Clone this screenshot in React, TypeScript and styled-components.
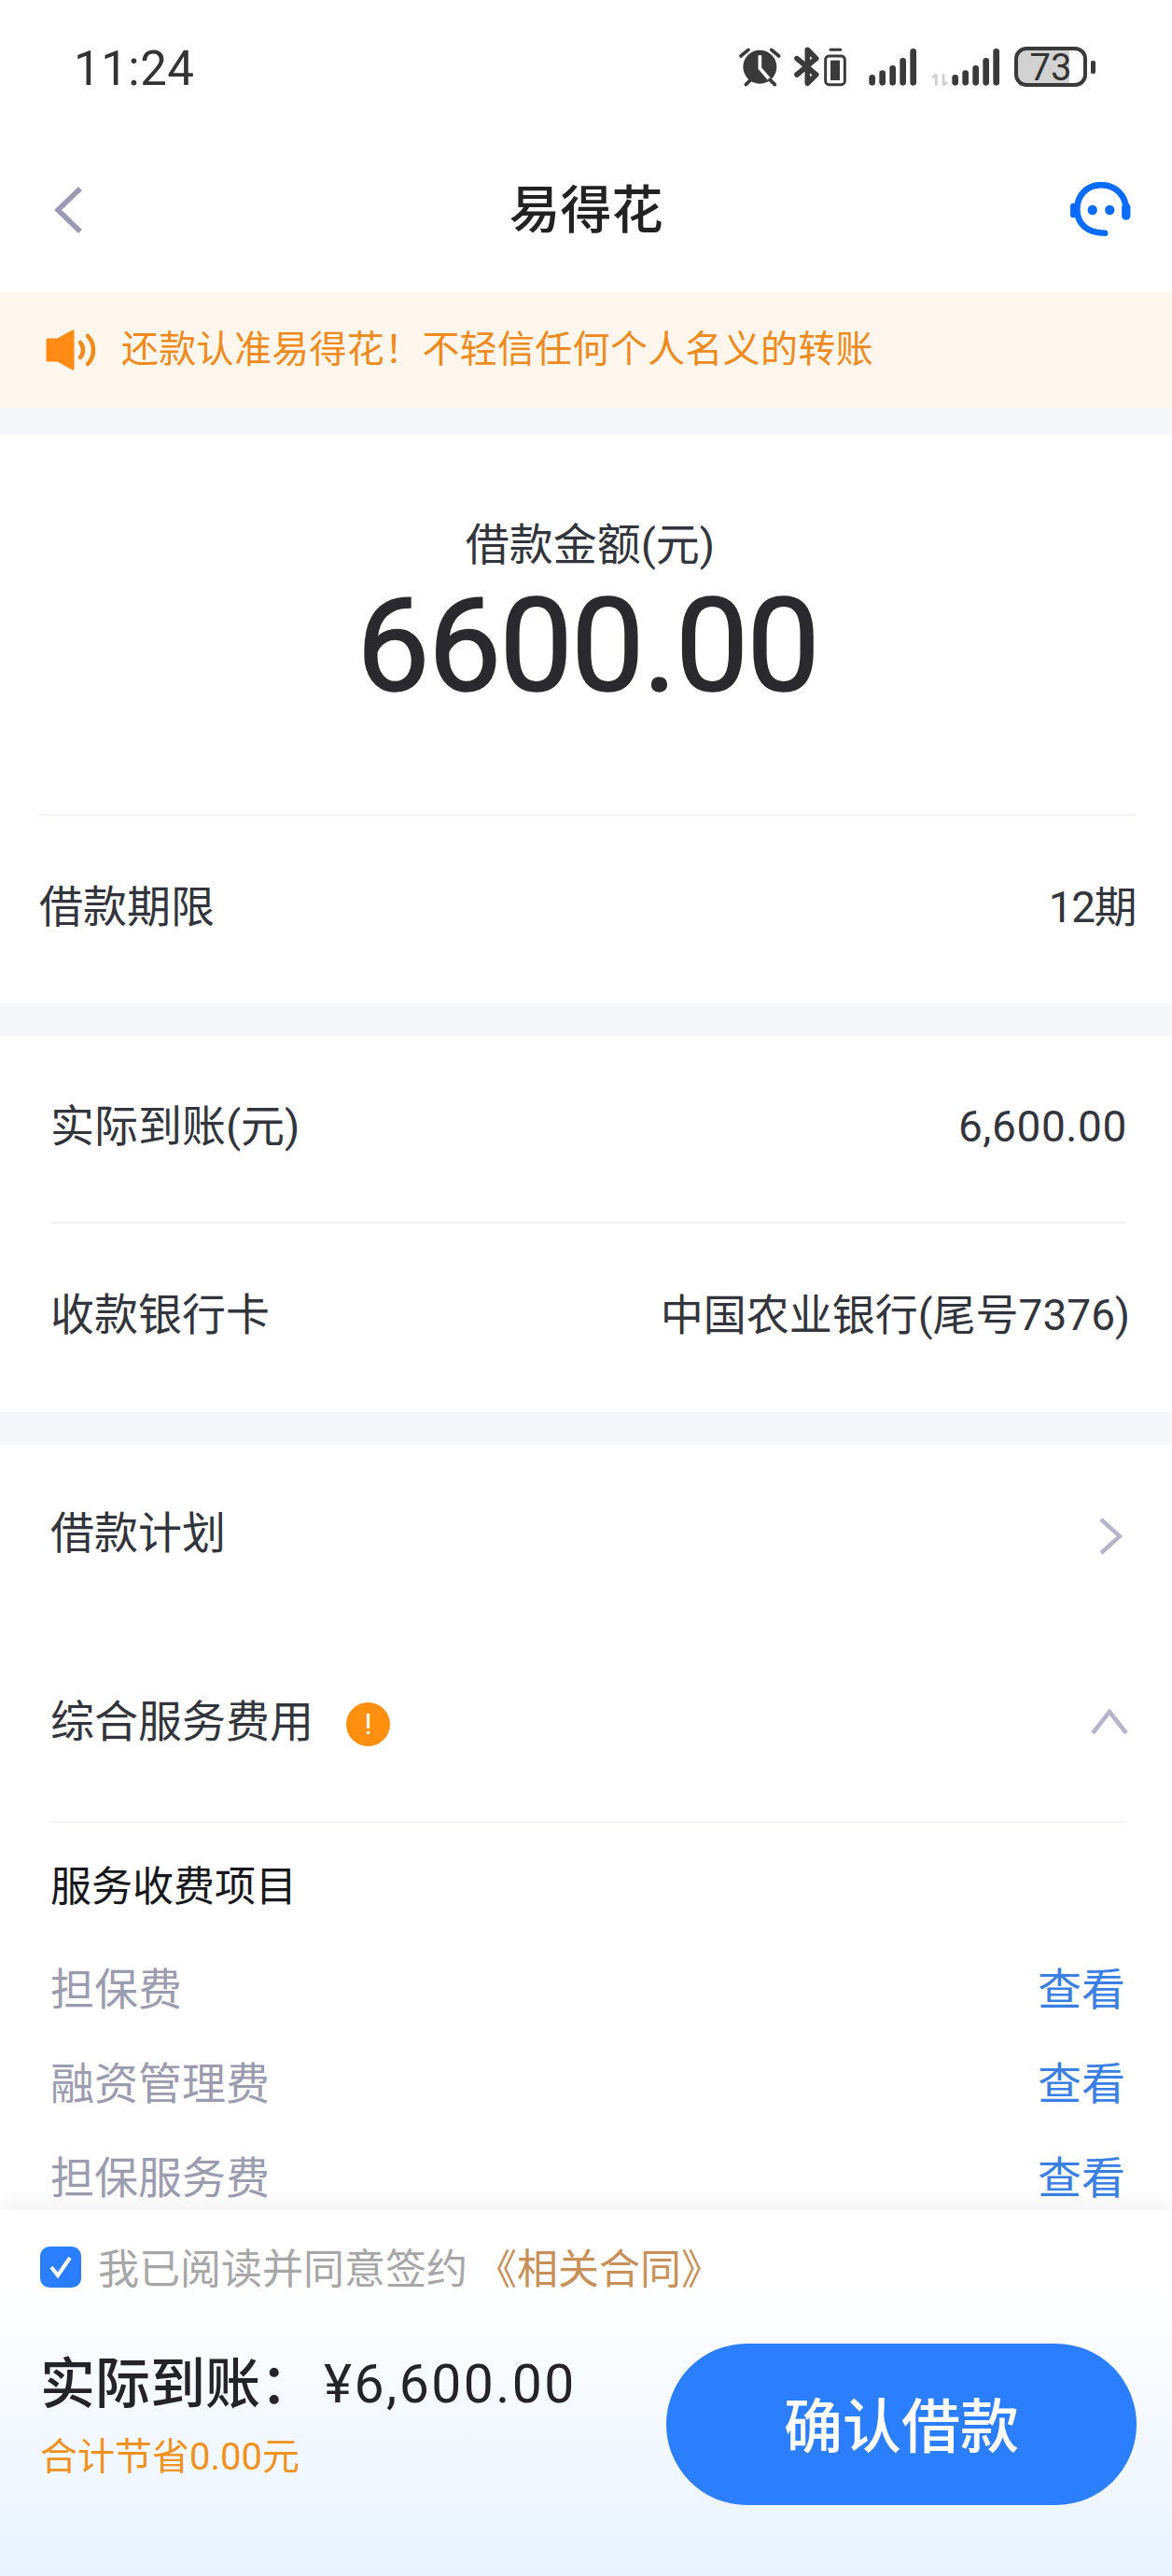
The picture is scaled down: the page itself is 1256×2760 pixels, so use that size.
import React from "react";
import styled, { createGlobalStyle } from "styled-components";

const CJK = `Roboto, "Noto Sans CJK SC", sans-serif`;

const Global = createGlobalStyle`
  html, body { margin: 0; padding: 0; background: #fff; }
  * { box-sizing: border-box; }
  body { font-family: ${CJK}; }
`;

const Page = styled.div`
  width: 1256px;
  height: 2760px;
  display: flex;
  flex-direction: column;
  overflow: hidden;
  background: #f5f7fa;
`;
const Main = styled.main`
  flex: 1;
  min-height: 0;
  overflow: hidden;
`;
const StatusBar = styled.div`
  height: 140px;
  background: #fff;
  display: flex;
  justify-content: space-between;
  padding: 30px 82px 0 79px;
`;
const Time = styled.div`
  font-family: Roboto, sans-serif;
  font-size: 51px;
  line-height: 88px;
  color: #333;
  letter-spacing: 0.5px;
`;
const StatusIcons = styled.div`
  display: flex;
  align-items: flex-start;
`;
const Battery = styled.div`
  width: 78px;
  height: 43px;
  margin: 20px 0 0 10px;
  border: 4px solid #3a3a3a;
  border-radius: 13px;
  background: linear-gradient(90deg, #d2d2d2 78%, #fff 78%);
  font-family: Roboto, sans-serif;
  font-size: 40px;
  line-height: 37px;
  text-align: center;
  color: #333;
`;
const BatteryNub = styled.div`
  width: 5px;
  height: 14px;
  margin: 35px 0 0 4px;
  border-radius: 2px;
  background: #3a3a3a;
`;
const NavBar = styled.header`
  height: 173px;
  background: #fff;
  display: grid;
  grid-template-columns: 1fr auto 1fr;
  align-items: center;
  padding: 0 42px 3px 56px;
`;
const NavTitle = styled.h1`
  margin: 0 14px 0 0;
  font-size: 55px;
  font-weight: 500;
  line-height: 70px;
  color: #222;
`;
const NavAction = styled.div`
  justify-self: end;
  display: flex;
`;
const Banner = styled.div`
  height: 124px;
  background: #fff7ee;
  display: flex;
  align-items: center;
  gap: 24px;
  padding: 0 0 0 48px;
  font-size: 40px;
  letter-spacing: 0.3px;
  line-height: 50px;
  color: #f08a1d;
`;
const Card = styled.section<{ $top: number }>`
  margin-top: ${(p) => p.$top}px;
  background: #fff;
`;
const AmountBlock = styled.div`
  height: 408px;
  margin: 0 39px 0 42px;
  border-bottom: 2px solid #f2f3f6;
  display: flex;
  flex-direction: column;
  align-items: center;
  padding-top: 88px;
`;
const AmountLabel = styled.div`
  margin-left: 6px;
  font-size: 47px;
  line-height: 60px;
  color: #33353d;
`;
const AmountValue = styled.div`
  margin-top: 3px;
  font-family: Roboto, sans-serif;
  font-size: 140px;
  line-height: 150px;
  letter-spacing: -2px;
  color: #2a2a2e;
  -webkit-text-stroke: 1.5px #2a2a2e;
`;
const Row = styled.div<{ $h: number; $left: number; $right: number; $line?: boolean }>`
  height: ${(p) => p.$h}px;
  margin: 0 ${(p) => p.$right}px 0 ${(p) => p.$left}px;
  display: flex;
  align-items: center;
  justify-content: space-between;
  font-size: 47px;
  line-height: 60px;
  color: #33353d;
  padding-bottom: 6px;
  border-bottom: ${(p) => (p.$line ? "2px solid #f2f3f6" : "0")};
`;
const RowValue = styled.span<{ $spacing?: number; $overhang?: number }>`
  font-size: 46px;
  letter-spacing: ${(p) => p.$spacing ?? 0}px;
  margin-right: ${(p) => -(p.$overhang ?? 0)}px;
`;
const RowLabel = styled.span`
  display: flex;
  align-items: center;
  gap: 35px;
`;
const WarnBadge = styled.span`
  width: 47px;
  height: 47px;
  border-radius: 50%;
  background: #ff8f0f;
  color: #fff;
  font-size: 32px;
  line-height: 47px;
  text-align: center;
  margin-top: 6px;
`;
const ChevronSlot = styled.span<{ $down: number; $shift: number }>`
  display: flex;
  margin-top: ${(p) => p.$down}px;
  margin-right: ${(p) => p.$shift}px;
`;
const FeeTitle = styled.div`
  margin: 0 50px 0 54px;
  height: 91px;
  padding-top: 38px;
  font-size: 44px;
  line-height: 62px;
  color: #17171c;
`;
const FeeList = styled.div`
  margin: 37px 50px 0 54px;
`;
const FeeRow = styled.div`
  height: 101px;
  display: flex;
  align-items: center;
  justify-content: space-between;
  font-size: 47px;
  line-height: 60px;
  color: #9c9cb0;
`;
const FeeLink = styled.span`
  color: #3a80e4;
`;
const Footer = styled.footer`
  height: 392px;
  flex: none;
  position: relative;
  padding: 36px 38px 0 43px;
  background: linear-gradient(180deg, #fff 0%, #fff 20%, #e9f3ff 100%);
  box-shadow: 0 -8px 18px rgba(0, 0, 0, 0.05);
`;
const AgreeRow = styled.div`
  display: flex;
  align-items: center;
  height: 50px;
  font-size: 44px;
  line-height: 50px;
  color: #a7a7a7;
`;
const AgreeText = styled.span`
  margin-top: 5px;
`;
const Check = styled.span`
  width: 44px;
  height: 44px;
  flex: none;
  border-radius: 10px;
  background: #2b7fff;
  margin-right: 18px;
  display: flex;
  align-items: center;
  justify-content: center;
`;
const Contract = styled.span`
  margin-top: 5px;
  margin-left: 9px;
  color: #c8915a;
`;
const SummaryRow = styled.div`
  display: flex;
  justify-content: space-between;
  align-items: flex-start;
  margin-top: 57px;
`;
const SummaryText = styled.div`
  display: flex;
  flex-direction: column;
`;
const Received = styled.div`
  font-size: 57px;
  letter-spacing: 2.5px;
  line-height: 70px;
  margin-top: 9px;
  color: #242428;
  display: flex;
  align-items: center;
`;
const ReceivedLabel = styled.span`
  font-weight: 500;
  width: 304px;
  font-size: 59px;
  letter-spacing: 0;
`;
const Saved = styled.div`
  margin-top: 18px;
  font-size: 40px;
  line-height: 50px;
  color: #f0921e;
`;
const ConfirmButton = styled.button`
  width: 504px;
  height: 173px;
  border: 0;
  border-radius: 87px;
  background: #2b7fff;
  color: #fff;
  font-family: ${CJK};
  font-size: 63px;
  font-weight: 500;
  padding: 0 0 6px;
`;

const Signal = ({ x }: { x: number }) => (
  <g stroke="#3a3a3a" strokeWidth="20" strokeLinecap="round">
    <path d={`M${x} 175V160M${x + 33} 175V146M${x + 66} 175V130M${x + 99} 175V106M${x + 132} 175V76`} />
  </g>
);

const StatusGlyphs = () => (
  <svg width="315" height="70" viewBox="0 0 945 210">
    <circle cx="157" cy="125" r="54" fill="#3a3a3a" />
    <path d="M157 88V130L188 165" stroke="#fff" strokeWidth="11" fill="none" />
    <path d="M96 90L120 70M218 90L194 70M112 182L128 166M205 182L189 166" stroke="#3a3a3a" strokeWidth="11" strokeLinecap="round" />
    <path d="M276 98L338 150L310 178V70L338 98L276 150" stroke="#3a3a3a" strokeWidth="17" fill="none" strokeLinejoin="round" strokeLinecap="round" />
    <rect x="368" y="90" width="62" height="92" rx="12" fill="none" stroke="#3a3a3a" strokeWidth="9" />
    <rect x="384" y="104" width="30" height="64" fill="#3a3a3a" />
    <path d="M384 70H416" stroke="#3a3a3a" strokeWidth="9" strokeLinecap="round" />
    <Signal x={518} />
    <path d="M724 185V150M712 160L724 148M747 148V185M759 173L747 185" stroke="#cfcfcf" strokeWidth="8" fill="none" />
    <Signal x={785} />
  </svg>
);

const BackIcon = () => (
  <svg width="34" height="52" viewBox="0 0 34 52">
    <path d="M30 3L6 26L30 49" stroke="#9a9ab5" strokeWidth="5.5" fill="none" />
  </svg>
);

const HeadsetIcon = () => (
  <svg width="68" height="60" viewBox="0 0 66 58">
    <path d="M8 28C8 13 19 3 33 3C47 3 59 13 59 29M8 28C8 44 19 53 37 53" stroke="#0a6cff" strokeWidth="6.5" fill="none" strokeLinecap="round" />
    <path d="M59 26V35" stroke="#0a6cff" strokeWidth="9" strokeLinecap="round" />
    <path d="M4 25V34" stroke="#0a6cff" strokeWidth="6" strokeLinecap="round" />
    <circle cx="24" cy="29" r="5" fill="#0a6cff" />
    <circle cx="42" cy="29" r="5" fill="#0a6cff" />
  </svg>
);

const SpeakerIcon = () => (
  <svg width="58" height="44" viewBox="0 0 58 42">
    <path d="M3 10H14L30 1V41L14 32H3Z" fill="#ff8a14" stroke="#ff8a14" strokeWidth="3" strokeLinejoin="round" />
    <path d="M38 13C42 17 42 25 38 29M46 6C54 14 54 28 46 36" stroke="#f08a1d" strokeWidth="4.5" fill="none" strokeLinecap="round" />
  </svg>
);

const ChevronRight = () => (
  <svg width="26" height="40" viewBox="0 0 26 40">
    <path d="M3 2L23 20L3 38" stroke="#b5b5cc" strokeWidth="4.5" fill="none" />
  </svg>
);

const ChevronUp = () => (
  <svg width="40" height="28" viewBox="0 0 40 28">
    <path d="M2 26L20 3L38 26" stroke="#b5b5cc" strokeWidth="4.5" fill="none" />
  </svg>
);

const fees = ["担保费", "融资管理费", "担保服务费"];

export default function App() {
  return (
    <Page>
      <Global />
      <Main>
        <StatusBar>
          <Time>11:24</Time>
          <StatusIcons>
            <StatusGlyphs />
            <Battery>73</Battery>
            <BatteryNub />
          </StatusIcons>
        </StatusBar>
        <NavBar>
          <BackIcon />
          <NavTitle>易得花</NavTitle>
          <NavAction>
            <HeadsetIcon />
          </NavAction>
        </NavBar>
        <Banner>
          <SpeakerIcon />
          <span>还款认准易得花！不轻信任何个人名义的转账</span>
        </Banner>
        <Card $top={29}>
          <AmountBlock>
            <AmountLabel>借款金额(元)</AmountLabel>
            <AmountValue>6600.00</AmountValue>
          </AmountBlock>
          <Row $h={201} $left={42} $right={39}>
            <span>借款期限</span>
            <RowValue $spacing={-1.5}>12期</RowValue>
          </Row>
        </Card>
        <Card $top={35}>
          <Row $h={201} $left={54} $right={50} $line>
            <span>实际到账(元)</span>
            <RowValue $spacing={0.6} $overhang={2}>6,600.00</RowValue>
          </Row>
          <Row $h={202} $left={54} $right={50}>
            <span>收款银行卡</span>
            <RowValue $overhang={5}>中国农业银行(尾号7376)</RowValue>
          </Row>
        </Card>
        <Card $top={35}>
          <Row $h={196} $left={54} $right={50}>
            <span>借款计划</span>
            <ChevronSlot $down={6} $shift={3}>
              <ChevronRight />
            </ChevronSlot>
          </Row>
          <Row $h={209} $left={54} $right={50} $line>
            <RowLabel>
              <span>综合服务费用</span>
              <WarnBadge>!</WarnBadge>
            </RowLabel>
            <ChevronSlot $down={0} $shift={-3}>
              <ChevronUp />
            </ChevronSlot>
          </Row>
          <FeeTitle>服务收费项目</FeeTitle>
          <FeeList>
            {fees.map((f) => (
              <FeeRow key={f}>
                <span>{f}</span>
                <FeeLink>查看</FeeLink>
              </FeeRow>
            ))}
          </FeeList>
        </Card>
      </Main>
      <Footer>
        <AgreeRow>
          <Check>
            <svg width="28" height="26" viewBox="0 0 28 26">
              <path d="M4 13L11 22L24 3" stroke="#fff" strokeWidth="4" fill="none" />
            </svg>
          </Check>
          <AgreeText>我已阅读并同意签约</AgreeText>
          <Contract>《相关合同》</Contract>
        </AgreeRow>
        <SummaryRow>
          <SummaryText>
            <Received>
              <ReceivedLabel>实际到账：</ReceivedLabel>
              <span>¥6,600.00</span>
            </Received>
            <Saved>合计节省0.00元</Saved>
          </SummaryText>
          <ConfirmButton>确认借款</ConfirmButton>
        </SummaryRow>
      </Footer>
    </Page>
  );
}
